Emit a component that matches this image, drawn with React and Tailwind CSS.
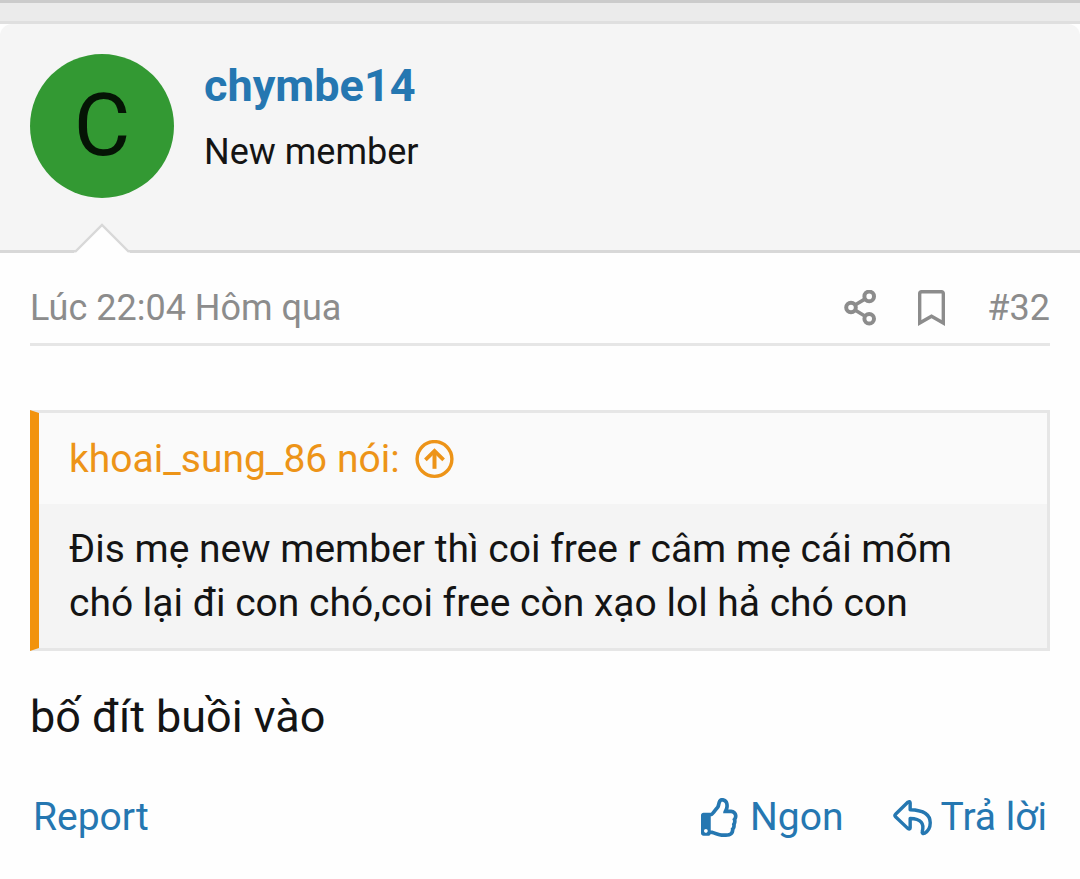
import React from "react";
import { FaRegThumbsUp, FaRegBookmark } from "react-icons/fa";

function ShareIcon() {
  return (
    <svg viewBox="0 0 32 36" className="h-9 w-8" fill="none" stroke="currentColor" strokeWidth="4" aria-hidden="true">
      <circle cx="7" cy="17.5" r="4.8" />
      <circle cx="25.2" cy="6.4" r="4.8" />
      <circle cx="25.2" cy="28.8" r="4.8" />
      <path d="M11 15L21.2 8.9M11 20L21.2 26.3" strokeWidth="3.6" />
    </svg>
  );
}

function ArrowCircleUpIcon() {
  return (
    <svg viewBox="0 0 39 39" className="size-[39px]" fill="none" stroke="currentColor" aria-hidden="true">
      <circle cx="19.5" cy="19" r="17.4" strokeWidth="3.4" />
      <path d="M19.5 28.8V12" strokeWidth="4" />
      <path d="M10.4 19.8L19.5 11L28.6 19.8" strokeWidth="3.8" />
    </svg>
  );
}

function ReplyIcon() {
  return (
    <svg viewBox="0 0 40 40" className="size-[39px]" fill="none" stroke="currentColor" strokeWidth="3.5" strokeLinejoin="round" aria-hidden="true">
      <path d="M2.6 16.6L15.4 4.2Q17.4 3 17.6 5V12C30 12.3 38.2 15.6 38.2 25.5C38.2 30.5 35.6 34.4 32.4 36.2C30.8 37 29.5 36 30 34.4C32.2 26.2 29 21.4 17.6 21.1V30.6Q17.4 32.6 15.4 31.4L2.6 19.2Q1.2 17.9 2.6 16.6Z" />
    </svg>
  );
}

export default function App() {
  return (
    <main className="bg-[#fefefe] font-[Roboto,sans-serif] text-[#141414]">
      <div className="h-6 border-t-[3px] border-b-[3px] border-t-[#cbcbcb] border-b-[#dfdfdf] bg-[#ebebeb]" />
      <article>
        <header className="relative flex gap-[30px] rounded-t-xl border-b-[3px] border-[#d8d8d8] bg-[#f5f5f5] px-[30px] pt-[30px] pb-[52px]">
          <a
            href="#profile"
            aria-label="chymbe14"
            className="flex size-36 shrink-0 items-center justify-center rounded-full bg-[#339933] pb-[2px] text-[87px] leading-none text-[#051405]"
          >
            C
          </a>
          <div>
            <h4 className="text-[45px] leading-[63px] font-bold text-[#2577b1]">
              <a href="#profile">chymbe14</a>
            </h4>
            <h5 className="mt-[10px] text-[36px] leading-[50px]">New member</h5>
          </div>
          <svg viewBox="0 0 56 30" className="absolute -bottom-[3px] left-[74px] h-[30px] w-14" aria-hidden="true">
            <path d="M0 30L28 2L56 30Z" fill="#fefefe" />
            <path d="M1 29L28 2L55 29" fill="none" stroke="#d8d8d8" strokeWidth="2.4" />
          </svg>
        </header>

        <div className="px-[30px] pt-[30px] pb-[35px]">
          <div className="flex items-center justify-between border-b-[3px] border-[#e6e6e6] pb-[10px] text-[36px] leading-[50px] text-[#8c8c8c]">
            <a href="#post">
              <time>Lúc 22:04 Hôm qua</time>
            </a>
            <div className="flex items-center gap-[42px]">
              <button type="button" aria-label="Share">
                <ShareIcon />
              </button>
              <button type="button" aria-label="Bookmark">
                <FaRegBookmark className="h-9 w-[27px]" />
              </button>
              <a href="#post">#32</a>
            </div>
          </div>

          <blockquote className="mt-16 border-[3px] border-l-[9px] border-[#e6e6e6] border-l-[#f2930d] bg-[#f4f4f4] text-[39px] leading-[54px]">
            <div className="bg-[#fafafa] px-[30px] pt-[19px] pb-[18px] text-[#ed9418]">
              <a href="#quoted" className="flex items-center gap-[15px]">
                khoai_sung_86 nói:
                <ArrowCircleUpIcon />
              </a>
            </div>
            <p className="px-[30px] py-[18px]">
              Đis mẹ new member thì coi free r câm mẹ cái mõm chó lại đi con chó,coi free còn xạo lol hả chó con
            </p>
          </blockquote>

          <p className="mt-[34px] text-[45px] leading-[63px]">bố đít buồi vào</p>

          <footer className="mt-[42px] flex items-center justify-between px-[3px] text-[39px] leading-[54px] text-[#2577b1]">
            <a href="#report">Report</a>
            <div className="flex items-center gap-[49px]">
              <button type="button" className="flex items-center gap-[10px]">
                <FaRegThumbsUp className="size-[39px]" aria-hidden="true" />
                Ngon
              </button>
              <a href="#reply" className="flex items-center gap-[9px]">
                <ReplyIcon />
                Trả lời
              </a>
            </div>
          </footer>
        </div>
      </article>
    </main>
  );
}
